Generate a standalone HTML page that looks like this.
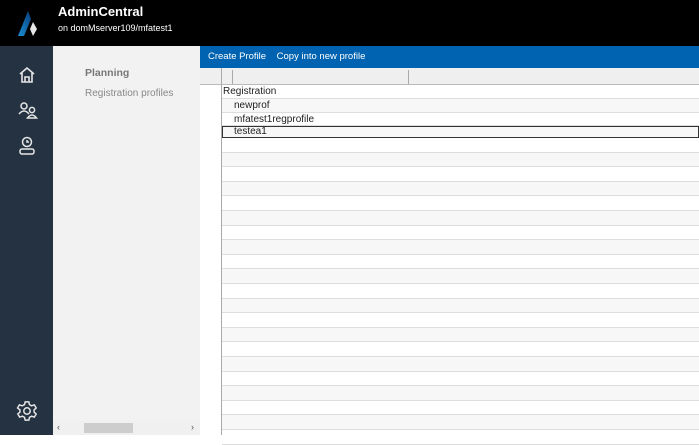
<!DOCTYPE html>
<html><head><style>
*{margin:0;padding:0;box-sizing:border-box}
body{width:699px;height:435px;overflow:hidden;font-family:"Liberation Sans",Arial,sans-serif;background:#fff;position:relative}
.hdr{position:absolute;left:0;top:0;width:699px;height:46px;background:#000}
.t1{position:absolute;left:58px;top:4px;color:#fff;font-weight:bold;font-size:13px}
.t2{position:absolute;left:58px;top:23px;color:#fff;font-size:9px}
.side{position:absolute;left:0;top:46px;width:53px;height:389px;background:#253241}
.nav{position:absolute;left:53px;top:46px;width:147px;height:389px;background:#f2f2f2}
.nav .p{position:absolute;left:32px;top:21px;font-size:10.5px;font-weight:bold;color:#777}
.nav .r{position:absolute;left:32px;top:42px;font-size:10px;color:#888}
.sb{position:absolute;left:53px;top:421px;width:147px;height:14px;background:#f0f0f0}
.thumb{position:absolute;left:84px;top:423px;width:49px;height:10px;background:#cdcdcd}
.tb{position:absolute;left:200px;top:46px;width:499px;height:22px;background:#0063b1;color:#fff;font-size:9.5px;line-height:22px;padding-left:8px}
.ch{position:absolute;left:200px;top:68px;width:499px;height:17px;background:#efefef;border-bottom:1px solid #bbb}
.grid{position:absolute;left:200px;top:85px;width:499px;height:350px;background:#fff}
.row{position:absolute;left:22px;right:0;border-bottom:1px solid #ddd;font-size:10px;color:#222;line-height:14px}
.vl{position:absolute;left:221px;top:68px;width:1px;height:367px;background:#aaa}
</style></head><body>
<div class="hdr">
<svg style="position:absolute;left:16px;top:9px" width="26" height="28" viewBox="0 0 26 28"><defs><linearGradient id="g" x1="0" y1="1" x2="1" y2="0"><stop offset="0" stop-color="#1a8fd6"/><stop offset="1" stop-color="#0a3f7a"/></linearGradient></defs><polygon points="2,27 12,2 15,10 8,27" fill="url(#g)"/><polygon points="17,13 21,20 17,27 14,20" fill="#e8e8e8"/></svg>
<div class="t1">AdminCentral</div><div class="t2">on domMserver109/mfatest1</div></div>
<div class="side">
<svg style="position:absolute;left:18px;top:20px" width="18" height="18" viewBox="0 0 18 18" fill="none" stroke="#e6e6e6" stroke-width="1.6"><path d="M2 8 L9 2 L16 8 M4 7 V16 H14 V7 M7 16 V11 H11 V16"/></svg>
<svg style="position:absolute;left:18px;top:55px" width="20" height="18" viewBox="0 0 20 18" fill="none" stroke="#e6e6e6" stroke-width="1.5"><circle cx="6" cy="5" r="3"/><path d="M1 13 Q6 7 11 13"/><circle cx="14" cy="9" r="2.6"/><path d="M9.5 17 Q14 11 18.5 17 Z"/></svg>
<svg style="position:absolute;left:18px;top:90px" width="18" height="20" viewBox="0 0 18 20" fill="none" stroke="#e6e6e6" stroke-width="1.5"><circle cx="9" cy="6" r="4.5"/><path d="M9 4 V6 H11"/><rect x="2" y="13" width="14" height="5" rx="2"/></svg>
<svg style="position:absolute;left:16px;top:354px" width="22" height="22" viewBox="0 0 24 24" fill="none" stroke="#e6e6e6" stroke-width="1.6"><circle cx="12" cy="12" r="3.5"/><path d="M10 2h4l.7 3 2.3 1.3 3-1 2 3.4-2.3 2.1v2.4l2.3 2.1-2 3.4-3-1-2.3 1.3-.7 3h-4l-.7-3-2.3-1.3-3 1-2-3.4 2.3-2.1v-2.4L1.7 8.7l2-3.4 3 1L9.3 5z"/></svg>
</div>
<div class="nav"><div class="p">Planning</div><div class="r">Registration profiles</div></div>
<div class="sb"></div><div class="thumb"></div>
<div style="position:absolute;left:57px;top:422px;font-size:9px;color:#555">&lsaquo;</div>
<div style="position:absolute;left:191px;top:422px;font-size:9px;color:#555">&rsaquo;</div>
<div class="tb">Create Profile&nbsp;&nbsp;&nbsp;&nbsp;Copy into new profile</div>
<div class="ch"><div style="position:absolute;left:32px;top:2px;width:1px;height:14px;background:#aaa"></div><div style="position:absolute;left:208px;top:2px;width:1px;height:14px;background:#aaa"></div></div>
<div class="grid">
<div class="row" style="top:0;height:14px;padding-left:1px">Registration</div>
<div class="row" style="top:14px;height:14px;padding-left:12px;background:#f7f7f7">newprof</div>
<div class="row" style="top:28px;height:13px;padding-left:12px;line-height:13px">mfatest1regprofile</div>
<div class="row" style="top:41px;height:12px;padding-left:11px;border:1.5px solid #333;line-height:9px;background:#f7f7f7">testea1</div>
<div class="row" style="top:53px;height:14.6px"></div>
<div id="rs"></div>
</div>
<div class="vl"></div>
<script>
var h='';for(var i=0;i<20;i++){var t=67.6+i*14.6;h+='<div class="row" style="top:'+t+'px;height:14.6px;background:'+(i%2==0?'#f7f7f7':'#fff')+'"></div>';}
document.getElementById('rs').innerHTML=h;
</script>
</body></html>
